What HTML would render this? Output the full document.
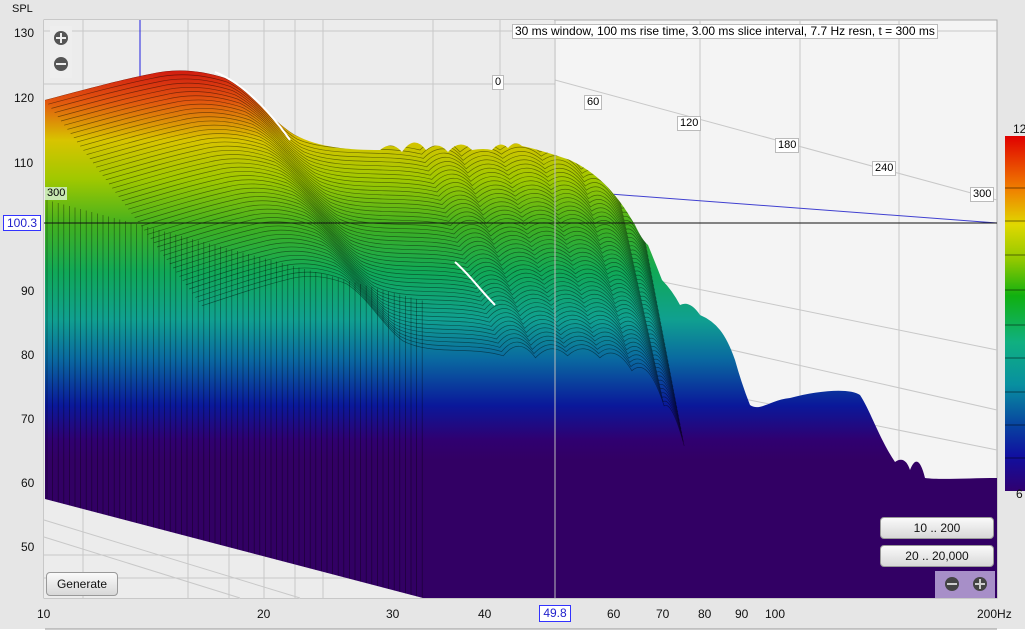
<!DOCTYPE html><html><head><style>
body{margin:0;width:1025px;height:633px;background:#e6e6e6;font-family:"Liberation Sans",sans-serif;overflow:hidden;position:relative}
.t{position:absolute;font-size:12px;color:#111}
.btn{position:absolute;background:linear-gradient(#fafafa,#d8d8d8);border:1px solid #999;border-radius:4px;font-size:12px;text-align:center;color:#111}
.lbl{position:absolute;background:#fff;border:1px solid #bbb;font-size:11px;padding:0 2px;line-height:13px}
</style></head><body>
<div class="t" style="left:12px;top:3px;font-size:11px">SPL</div>
<div class="t" style="left:14px;top:26px">130</div>
<div class="t" style="left:14px;top:91px">120</div>
<div class="t" style="left:14px;top:156px">110</div>
<div class="t" style="left:21px;top:284px">90</div>
<div class="t" style="left:21px;top:348px">80</div>
<div class="t" style="left:21px;top:412px">70</div>
<div class="t" style="left:21px;top:476px">60</div>
<div class="t" style="left:21px;top:540px">50</div>
<div style="position:absolute;left:3px;top:215px;width:36px;height:14px;border:1px solid #33f;background:#fff;color:#22c;font-size:12px;line-height:14px;text-align:center">100.3</div>
<svg style="position:absolute;left:0;top:0" width="1025" height="633">
<defs>
<linearGradient id="g" gradientUnits="userSpaceOnUse" x1="0" y1="70" x2="0" y2="460">
<stop offset="0" stop-color="#d01a10"/><stop offset="0.08" stop-color="#e2560f"/><stop offset="0.18" stop-color="#d8c400"/><stop offset="0.28" stop-color="#a0c800"/><stop offset="0.4" stop-color="#40b020"/><stop offset="0.52" stop-color="#10a858"/><stop offset="0.64" stop-color="#10a090"/><stop offset="0.74" stop-color="#0a6aa0"/><stop offset="0.86" stop-color="#0a189a"/><stop offset="0.95" stop-color="#300070"/><stop offset="1" stop-color="#320064"/>
</linearGradient>
<linearGradient id="cb" x1="0" y1="0" x2="0" y2="1">
<stop offset="0" stop-color="#e00000"/><stop offset="0.15" stop-color="#f08000"/><stop offset="0.25" stop-color="#e0d800"/><stop offset="0.35" stop-color="#90c800"/><stop offset="0.45" stop-color="#10b010"/><stop offset="0.58" stop-color="#10b080"/><stop offset="0.7" stop-color="#0890a0"/><stop offset="0.82" stop-color="#0840a0"/><stop offset="0.9" stop-color="#1010a0"/><stop offset="1" stop-color="#300070"/>
</linearGradient>
<clipPath id="c"><path id="sil" d="M45,100 C90,88 120,80 150,74 C175,68 200,70 225,78 C250,90 270,120 295,135 C320,148 350,150 380,150 Q392,140 402,152 Q414,134 426,150 Q438,140 448,152 Q460,138 472,150 Q484,148 492,150 Q500,140 508,148 Q515,140 522,146 C540,150 555,155 570,160 C595,172 615,190 635,225 Q642,240 648,245 Q655,262 662,280 Q672,290 680,305 Q690,300 700,315 Q712,320 720,330 Q728,340 735,360 Q742,385 750,405 C760,412 770,400 790,398 C820,390 850,388 860,395 C870,410 880,440 895,462 Q905,455 910,470 Q918,450 925,478 C940,480 970,478 997,478 L997,598 L423,598 L45,499 Z"/></clipPath>
</defs>
<rect x="44" y="20" width="953" height="578" fill="#f4f4f4" stroke="#aaa"/>
<rect x="44" y="20" width="510" height="578" fill="#ececec"/>
<g stroke="#c8c8c8" stroke-width="1">
<line x1="44" y1="31" x2="997" y2="31"/><line x1="44" y1="84" x2="555" y2="84"/>
<line x1="83" y1="20" x2="83" y2="598"/><line x1="188" y1="20" x2="188" y2="598"/><line x1="229" y1="20" x2="229" y2="598"/><line x1="264" y1="20" x2="264" y2="598"/><line x1="295" y1="20" x2="295" y2="598"/><line x1="323" y1="20" x2="323" y2="598"/><line x1="433" y1="20" x2="433" y2="598"/><line x1="500" y1="20" x2="500" y2="598"/>
<line x1="700" y1="20" x2="700" y2="598"/><line x1="800" y1="20" x2="800" y2="598"/><line x1="899" y1="20" x2="899" y2="598"/>
<line x1="555" y1="80" x2="997" y2="200"/><line x1="555" y1="260" x2="997" y2="350"/><line x1="555" y1="310" x2="997" y2="410"/><line x1="700" y1="390" x2="997" y2="450"/>
<line x1="44" y1="520" x2="300" y2="598"/><line x1="44" y1="537" x2="240" y2="598"/><line x1="44" y1="555" x2="423" y2="555"/><line x1="44" y1="578" x2="423" y2="578"/>
</g>
<line x1="140" y1="20" x2="140" y2="78" stroke="#2020e0"/>
<line x1="610" y1="194" x2="997" y2="223" stroke="#4040d0"/>
<use href="#sil" fill="url(#g)"/>
<g clip-path="url(#c)" id="lines" fill="none" stroke="#000" stroke-opacity="0.45" stroke-width="0.7"></g>
<line x1="44" y1="223" x2="997" y2="223" stroke="#111"/>
<line x1="555" y1="20" x2="555" y2="598" stroke="#bbb"/>
<path d="M215,72 C240,82 265,105 290,140" stroke="#fff" stroke-width="2" fill="none"/>
<path d="M455,262 C470,275 480,290 495,305" stroke="#fff" stroke-width="2" fill="none"/>
<rect x="1005" y="136" width="20" height="355" fill="url(#cb)"/>
<g stroke="#000" stroke-opacity="0.5"><line x1="1005" y1="188" x2="1025" y2="188"/><line x1="1005" y1="221" x2="1025" y2="221"/><line x1="1005" y1="255" x2="1025" y2="255"/><line x1="1005" y1="290" x2="1025" y2="290"/><line x1="1005" y1="325" x2="1025" y2="325"/><line x1="1005" y1="358" x2="1025" y2="358"/><line x1="1005" y1="392" x2="1025" y2="392"/><line x1="1005" y1="425" x2="1025" y2="425"/><line x1="1005" y1="458" x2="1025" y2="458"/></g>
<rect x="935" y="571" width="60" height="27" fill="#a78fc8"/>
<circle cx="952" cy="584" r="7" fill="#444"/><rect x="947" y="583" width="10" height="2" fill="#ccc"/>
<circle cx="980" cy="584" r="7" fill="#444"/><rect x="975" y="583" width="10" height="2" fill="#ccc"/><rect x="979" y="579" width="2" height="10" fill="#ccc"/>
<rect x="50" y="26" width="22" height="52" fill="#eee"/>
<circle cx="61" cy="38" r="7" fill="#555"/><rect x="56" y="37" width="10" height="2" fill="#eee"/><rect x="60" y="33" width="2" height="10" fill="#eee"/>
<circle cx="61" cy="64" r="7" fill="#555"/><rect x="56" y="63" width="10" height="2" fill="#eee"/>
<rect x="0" y="629" width="1025" height="4" fill="#fff"/><line x1="45" y1="629" x2="997" y2="629" stroke="#999"/>
</svg>
<script>
var g=document.getElementById('lines'),s='';
for(var i=0;i<50;i++){var dx=i*3.2,dy=i*4.2,sc=1-i*0.004;
function p(x,y){return (45+(x-45)*sc+dx).toFixed(1)+','+(y+dy).toFixed(1);}
s+='<path d="M'+p(45,100)+' C'+p(90,88)+' '+p(120,80)+' '+p(150,74)+' C'+p(175,68)+' '+p(200,70)+' '+p(225,78)+' C'+p(250,90)+' '+p(270,120)+' '+p(295,135)+' C'+p(330,150)+' '+p(380,140)+' '+p(420,150)+' Q'+p(440,130)+' '+p(460,152)+' Q'+p(480,135)+' '+p(500,150)+' Q'+p(520,135)+' '+p(540,152)+' Q'+p(560,138)+' '+p(580,165)+' Q'+p(600,150)+' '+p(620,200)+' Q'+p(630,195)+' '+p(645,240)+'"/>';
}
for(var k=0;k<68;k++){var x=47+k*5.6;s+='<line x1="'+x+'" y1="'+(200+k*1.5)+'" x2="'+x+'" y2="598"/>';}
g.innerHTML=s;
</script>
<div class="lbl" style="left:512px;top:24px;font-size:12px">30 ms window, 100 ms rise time, 3.00 ms slice interval, 7.7 Hz resn, t = 300 ms</div>
<div class="lbl" style="left:492px;top:75px">0</div>
<div class="lbl" style="left:584px;top:95px">60</div>
<div class="lbl" style="left:677px;top:116px">120</div>
<div class="lbl" style="left:775px;top:138px">180</div>
<div class="lbl" style="left:872px;top:161px">240</div>
<div class="lbl" style="left:970px;top:187px">300</div>
<div class="lbl" style="left:45px;top:187px;background:#c8e8b0;border:none">300</div>
<div class="t" style="left:1013px;top:122px">12</div>
<div class="t" style="left:1016px;top:487px">6</div>
<div class="btn" style="left:880px;top:517px;width:112px;height:20px;line-height:20px">10 .. 200</div>
<div class="btn" style="left:880px;top:545px;width:112px;height:20px;line-height:20px">20 .. 20,000</div>
<div class="btn" style="left:46px;top:572px;width:70px;height:22px;line-height:22px">Generate</div>
<div class="t" style="left:37px;top:607px">10</div>
<div class="t" style="left:257px;top:607px">20</div>
<div class="t" style="left:386px;top:607px">30</div>
<div class="t" style="left:478px;top:607px">40</div>
<div style="position:absolute;left:539px;top:605px;width:30px;height:15px;border:1px solid #33f;background:#fff;color:#22c;font-size:12px;line-height:15px;text-align:center">49.8</div>
<div class="t" style="left:607px;top:607px">60</div>
<div class="t" style="left:656px;top:607px">70</div>
<div class="t" style="left:698px;top:607px">80</div>
<div class="t" style="left:735px;top:607px">90</div>
<div class="t" style="left:765px;top:607px">100</div>
<div class="t" style="left:977px;top:607px">200Hz</div>
</body></html>
